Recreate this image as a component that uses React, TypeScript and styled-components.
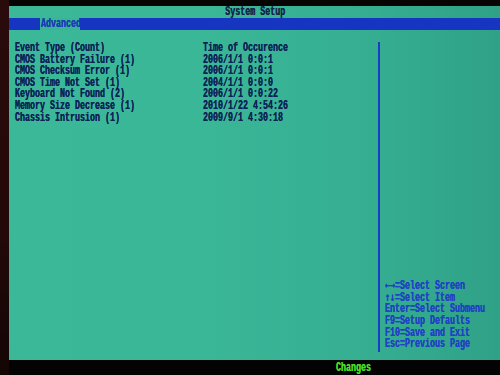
import React from "react";
import styled, { createGlobalStyle } from "styled-components";

const Global = createGlobalStyle`
  html, body { margin: 0; padding: 0; background: #050303; }
  #root { width: 500px; height: 375px; overflow: hidden; }
`;

const Frame = styled.div`
  width: 500px;
  height: 375px;
  display: flex;
  flex-direction: row;
  background: #050303;
`;

const LeftBezel = styled.div`
  width: 9px;
  flex: none;
  background: linear-gradient(180deg, #2a0b0b 0%, #240909 60%, #140505 100%);
`;

const Column = styled.div`
  flex: 1;
  display: flex;
  flex-direction: column;
  min-width: 0;
`;

const TopBezel = styled.div`
  height: 6px;
  flex: none;
  background: #070404;
`;

const Screen = styled.div`
  flex: 1;
  display: flex;
  flex-direction: column;
  background: linear-gradient(90deg, #3ab897 0%, #3ab797 40%, #35ad91 75%, #2fa186 100%);
`;

const Mono = styled.span<{ $origin?: string }>`
  display: inline-block;
  white-space: pre;
  font-family: "Liberation Mono", "DejaVu Sans Mono", monospace;
  font-weight: 700;
  font-size: 12px;
  transform: scaleX(0.695);
  transform-origin: ${(p) => p.$origin || "left"} center;
  text-shadow: 0 0 0.6px currentColor;
`;

const Arrow = styled.span`
  font-family: "DejaVu Sans Mono", monospace;
`;

const TitleRow = styled.div`
  height: 12px;
  display: flex;
  justify-content: center;
  align-items: center;
  color: #13264a;
  line-height: 12px;
  padding-left: 1px;
`;

const TabBar = styled.div`
  height: 12px;
  background: #1636c2;
  display: flex;
  align-items: stretch;
  padding-left: 31px;
`;

const Tab = styled.div`
  width: 39px;
  background: #3ab495;
  color: #1a3ab8;
  display: flex;
  align-items: center;
  line-height: 12px;
  padding-left: 1px;
  overflow: hidden;
`;

const Body = styled.div`
  flex: 1;
  display: flex;
  flex-direction: row;
  min-height: 0;
`;

const MainPanel = styled.div`
  flex: none;
  width: 363px;
  padding: 10px 0 0 6px;
  display: grid;
  grid-template-columns: 188px 175px;
  align-content: start;
  color: #0d2356;
`;

const Cell = styled.div`
  height: 11.6px;
  line-height: 11.6px;
  overflow: visible;
`;

const HelpPanel = styled.div`
  flex: 1;
  min-width: 0;
  margin: 12px 0 8px 0;
  border-left: 2px solid #1c3cc4;
  padding: 0 0 4px 5px;
  display: flex;
  flex-direction: column;
  justify-content: flex-end;
  color: #2141c6;
`;

const HelpLine = styled.div`
  height: 11.7px;
  line-height: 11.7px;
`;

const BottomBar = styled.div`
  height: 15px;
  flex: none;
  background: #040303;
  display: flex;
  align-items: center;
  padding-left: 327px;
  color: #45e024;
`;

const events: [string, string][] = [
  ["Event Type (Count)", "Time of Occurence"],
  ["CMOS Battery Failure (1)", "2006/1/1 0:0:1"],
  ["CMOS Checksum Error (1)", "2006/1/1 0:0:1"],
  ["CMOS Time Not Set (1)", "2004/1/1 0:0:0"],
  ["Keyboard Not Found (2)", "2006/1/1 0:0:22"],
  ["Memory Size Decrease (1)", "2010/1/22 4:54:26"],
  ["Chassis Intrusion (1)", "2009/9/1 4:30:18"],
];

const help: [string, string][] = [
  ["\u2190\u2192", "=Select Screen"],
  ["\u2191\u2193", "=Select Item"],
  ["", "Enter=Select Submenu"],
  ["", "F9=Setup Defaults"],
  ["", "F10=Save and Exit"],
  ["", "Esc=Previous Page"],
];

export default function App() {
  return (
    <>
      <Global />
      <Frame>
        <LeftBezel />
        <Column>
          <TopBezel />
          <Screen>
            <TitleRow>
              <Mono $origin="center">System Setup</Mono>
            </TitleRow>
            <TabBar>
              <Tab>
                <Mono>Advanced</Mono>
              </Tab>
            </TabBar>
            <Body>
              <MainPanel>
                {events.map(([a, b]) => (
                  <React.Fragment key={a}>
                    <Cell>
                      <Mono>{a}</Mono>
                    </Cell>
                    <Cell>
                      <Mono>{b}</Mono>
                    </Cell>
                  </React.Fragment>
                ))}
              </MainPanel>
              <HelpPanel>
                {help.map(([arrow, text]) => (
                  <HelpLine key={text}>
                    <Mono>
                      {arrow && <Arrow>{arrow}</Arrow>}
                      {text}
                    </Mono>
                  </HelpLine>
                ))}
              </HelpPanel>
            </Body>
          </Screen>
          <BottomBar>
            <Mono>Changes</Mono>
          </BottomBar>
        </Column>
      </Frame>
    </>
  );
}
